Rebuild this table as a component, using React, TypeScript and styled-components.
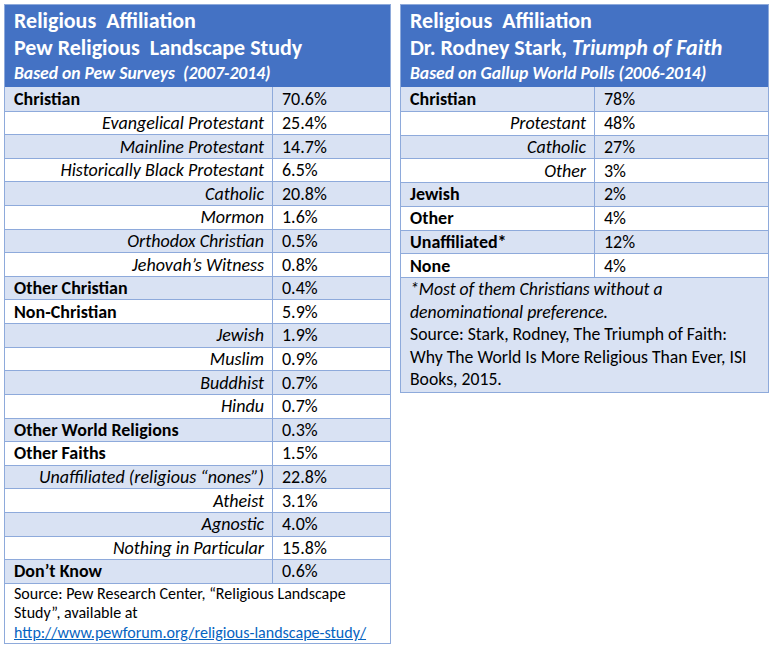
import React from "react";
import styled, { createGlobalStyle } from "styled-components";

const GlobalStyle = createGlobalStyle`
  html, body { margin: 0; padding: 0; background: #ffffff; }
  body { font-family: Carlito, "Open Sans", "Liberation Sans", sans-serif; color: #000; }
`;

const BORDER = "#8eaadb";
const LIGHT = "#d9e2f3";
const BLUE = "#4472c4";

const Page = styled.div`
  display: flex;
  align-items: flex-start;
  gap: 9px;
  padding: 4px 0 0 4px;
`;

const Table = styled.div<{ $c1: number; $c2: number }>`
  display: grid;
  grid-template-columns: ${(p) => p.$c1}px ${(p) => p.$c2 + 1}px;
  border: 1px solid ${BORDER};
`;

const Header = styled.div`
  grid-column: 1 / -1;
  background: ${BLUE};
  color: #fff;
  height: 82px;
  box-sizing: border-box;
  padding: 2px 9px 0;
  display: flex;
  flex-direction: column;
`;

const Title = styled.div`
  font-size: 22px;
  font-weight: 700;
  line-height: 27px;
  white-space: nowrap;
`;

const Sub = styled.div`
  font-size: 17.6px;
  font-weight: 700;
  font-style: italic;
  line-height: 24px;
  white-space: nowrap;
`;

const Cell = styled.div<{ $bg: string; $h: number; $first: boolean }>`
  background: ${(p) => p.$bg};
  height: ${(p) => p.$h}px;
  box-sizing: border-box;
  border-top: ${(p) => (p.$first ? "none" : `1px solid ${BORDER}`)};
  display: flex;
  align-items: center;
  font-size: 18px;
  white-space: nowrap;
`;

const Label = styled(Cell)<{ $kind: "bold" | "sub" }>`
  padding: 0 8px 0 9px;
  justify-content: ${(p) => (p.$kind === "sub" ? "flex-end" : "flex-start")};
  font-weight: ${(p) => (p.$kind === "bold" ? 700 : 400)};
  font-style: ${(p) => (p.$kind === "sub" ? "italic" : "normal")};
`;

const Value = styled(Cell)`
  border-left: 1px solid ${BORDER};
  padding-left: 9px;
`;

const Note = styled.div<{ $bg: string; $lh: number; $fs: number }>`
  grid-column: 1 / -1;
  background: ${(p) => p.$bg};
  border-top: 1px solid ${BORDER};
  padding: 0 9px 1px;
  font-size: ${(p) => p.$fs}px;
  line-height: ${(p) => p.$lh}px;
  white-space: nowrap;
`;

const Em = styled.div`
  font-style: italic;
`;

const Link = styled.a`
  color: #0563c1;
  text-decoration: underline;
`;

type Row = [string, string, "bold" | "sub"];

const pewRows: Row[] = [
  ["Christian", "70.6%", "bold"],
  ["Evangelical Protestant", "25.4%", "sub"],
  ["Mainline Protestant", "14.7%", "sub"],
  ["Historically Black Protestant", "6.5%", "sub"],
  ["Catholic", "20.8%", "sub"],
  ["Mormon", "1.6%", "sub"],
  ["Orthodox Christian", "0.5%", "sub"],
  ["Jehovah\u2019s Witness", "0.8%", "sub"],
  ["Other Christian", "0.4%", "bold"],
  ["Non-Christian", "5.9%", "bold"],
  ["Jewish", "1.9%", "sub"],
  ["Muslim", "0.9%", "sub"],
  ["Buddhist", "0.7%", "sub"],
  ["Hindu", "0.7%", "sub"],
  ["Other World Religions", "0.3%", "bold"],
  ["Other Faiths", "1.5%", "bold"],
  ["Unaffiliated (religious \u201cnones\u201d)", "22.8%", "sub"],
  ["Atheist", "3.1%", "sub"],
  ["Agnostic", "4.0%", "sub"],
  ["Nothing in Particular", "15.8%", "sub"],
  ["Don\u2019t Know", "0.6%", "bold"],
];

const starkRows: Row[] = [
  ["Christian", "78%", "bold"],
  ["Protestant", "48%", "sub"],
  ["Catholic", "27%", "sub"],
  ["Other", "3%", "sub"],
  ["Jewish", "2%", "bold"],
  ["Other", "4%", "bold"],
  ["Unaffiliated*", "12%", "bold"],
  ["None", "4%", "bold"],
];

function Rows({ rows, h }: { rows: Row[]; h: number }) {
  return (
    <>
      {rows.map(([label, value, kind], i) => {
        const bg = i % 2 === 0 ? LIGHT : "#ffffff";
        return (
          <React.Fragment key={i}>
            <Label $bg={bg} $h={h} $first={i === 0} $kind={kind}>
              {label}
            </Label>
            <Value $bg={bg} $h={h} $first={i === 0}>
              {value}
            </Value>
          </React.Fragment>
        );
      })}
    </>
  );
}

export default function App() {
  return (
    <>
      <GlobalStyle />
      <Page>
        <Table $c1={267} $c2={117}>
          <Header>
            <Title>Religious&nbsp; Affiliation</Title>
            <Title>Pew Religious&nbsp; Landscape Study</Title>
            <Sub>Based on Pew Surveys&nbsp; (2007-2014)</Sub>
          </Header>
          <Rows rows={pewRows} h={23.62} />
          <Note $bg="#ffffff" $lh={19.5} $fs={16}>
            Source: Pew Research Center, &ldquo;Religious Landscape
            <br />
            Study&rdquo;, available at
            <br />
            <Link href="#">http://www.pewforum.org/religious-landscape-study/</Link>
          </Note>
        </Table>
        <Table $c1={193} $c2={173}>
          <Header>
            <Title>Religious&nbsp; Affiliation</Title>
            <Title>
              Dr. Rodney Stark, <i>Triumph of Faith</i>
            </Title>
            <Sub>Based on Gallup World Polls (2006-2014)</Sub>
          </Header>
          <Rows rows={starkRows} h={23.75} />
          <Note $bg={LIGHT} $lh={22.5} $fs={17.7}>
            <Em>
              *Most of them Christians without a
              <br />
              denominational preference.
            </Em>
            Source: Stark, Rodney, The Triumph of Faith:
            <br />
            Why The World Is More Religious Than Ever, ISI
            <br />
            Books, 2015.
          </Note>
        </Table>
      </Page>
    </>
  );
}
